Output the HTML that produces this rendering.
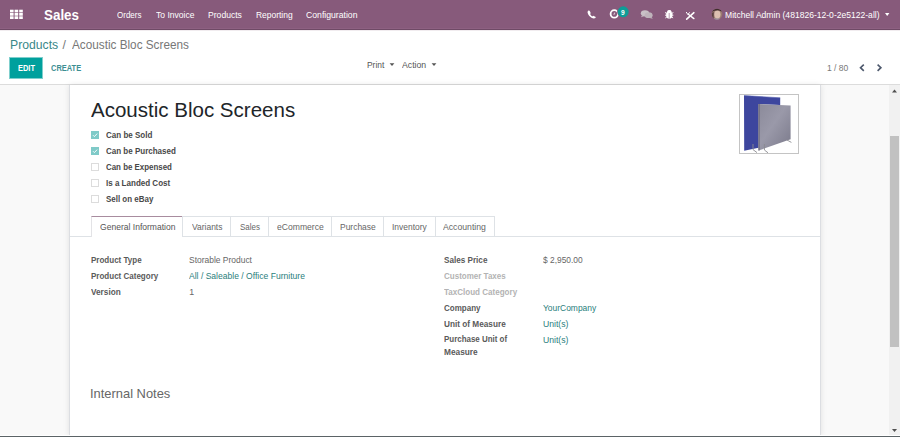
<!DOCTYPE html>
<html><head><meta charset="utf-8"><title>Acoustic Bloc Screens</title>
<style>
html,body{margin:0;padding:0;width:900px;height:437px;overflow:hidden;background:#f9f9f9;font-family:"Liberation Sans",sans-serif;}
.t{position:absolute;white-space:nowrap;}
.r{position:absolute;}
</style></head><body>
<div class="r" style="left:0px;top:0px;width:900px;height:28px;background:#875A7B;"></div>
<div class="r" style="left:0px;top:28px;width:900px;height:1px;background:#8d6081;"></div>
<div class="r" style="left:0px;top:29px;width:900px;height:1px;background:#6f4a66;"></div>
<div class="r" style="left:0px;top:30px;width:900px;height:54px;background:#fff;"></div>
<div class="r" style="left:0px;top:30px;width:900px;height:1px;background:#f1ecef;"></div>
<div class="r" style="left:0px;top:84px;width:900px;height:1px;background:#dcdcdc;"></div>
<div class="r" style="left:0px;top:85px;width:889px;height:351px;background:#f9f9f9;"></div>
<div class="r" style="left:69px;top:85px;width:752px;height:351px;background:#fff;border-left:1px solid #dcdee2;border-right:1px solid #dcdee2;box-sizing:border-box;box-shadow:0 0 6px rgba(0,0,0,0.10);"></div>
<div class="r" style="left:889px;top:85px;width:11px;height:351px;background:#f1f1f1;"></div>
<div class="r" style="left:890px;top:136px;width:9px;height:211px;background:#c1c1c1;"></div>
<svg class="r" style="left:889px;top:85px" width="11" height="351"><path d="M892 92.5 L894.5 89.5 L897 92.5Z" transform="translate(-889,-85)" fill="#505050"/><path d="M892 429 L894.5 432 L897 429Z" transform="translate(-889,-85)" fill="#505050"/></svg>
<div class="r" style="left:0px;top:435px;width:900px;height:1px;background:#fff;"></div>
<div class="r" style="left:0px;top:436px;width:900px;height:1px;background:#5b6366;"></div>
<svg class="r" style="left:0;top:0" width="40" height="29"><rect x="10" y="9.7" width="3.6" height="2.7" fill="#fff"/><rect x="10" y="13.0" width="3.6" height="2.7" fill="#fff"/><rect x="10" y="16.3" width="3.6" height="2.7" fill="#fff"/><rect x="14.6" y="9.7" width="3.6" height="2.7" fill="#fff"/><rect x="14.6" y="13.0" width="3.6" height="2.7" fill="#fff"/><rect x="14.6" y="16.3" width="3.6" height="2.7" fill="#fff"/><rect x="19.2" y="9.7" width="3.6" height="2.7" fill="#fff"/><rect x="19.2" y="13.0" width="3.6" height="2.7" fill="#fff"/><rect x="19.2" y="16.3" width="3.6" height="2.7" fill="#fff"/></svg>
<div class="t" style="left:44.20px;top:8.08px;font-size:14px;line-height:14px;color:#fff;font-weight:700;transform:scaleX(0.9565);transform-origin:0 0;">Sales</div>
<div class="t" style="left:117.30px;top:11.23px;font-size:9px;line-height:9px;color:#fff;transform:scaleX(0.8891);transform-origin:0 0;">Orders</div>
<div class="t" style="left:156.00px;top:11.23px;font-size:9px;line-height:9px;color:#fff;transform:scaleX(0.9478);transform-origin:0 0;">To Invoice</div>
<div class="t" style="left:207.80px;top:11.23px;font-size:9px;line-height:9px;color:#fff;transform:scaleX(0.9551);transform-origin:0 0;">Products</div>
<div class="t" style="left:255.60px;top:11.23px;font-size:9px;line-height:9px;color:#fff;transform:scaleX(0.9380);transform-origin:0 0;">Reporting</div>
<div class="t" style="left:305.60px;top:11.23px;font-size:9px;line-height:9px;color:#fff;transform:scaleX(0.9621);transform-origin:0 0;">Configuration</div>
<svg class="r" style="left:580px;top:0" width="150" height="29" viewBox="580 0 150 29">
<path transform="translate(0,-0.5)" d="M588.2 11.2 C589 10.8 589.6 11 590 12 L590.6 13.3 C590.8 13.8 590.5 14.2 590.1 14.5 C590.6 15.6 591.4 16.4 592.4 16.9 C592.7 16.5 593.1 16.2 593.6 16.4 L594.9 17 C595.7 17.4 595.9 18 595.4 18.6 C594.4 19.3 593 19.2 591.5 18.3 C589.7 17.2 588.3 15.5 587.7 13.6 C587.4 12.6 587.6 11.7 588.2 11.2Z" fill="#fff"/>
<circle cx="614.3" cy="13.9" r="3.7" fill="none" stroke="#fff" stroke-width="1.8"/>
<path d="M614.6 12.6 V14.2 H613.4" fill="none" stroke="#f3e6ef" stroke-width="0.8"/>
<circle cx="623.2" cy="11.8" r="6.1" fill="#875A7B"/><circle cx="623.2" cy="11.8" r="5.5" fill="#0e9c97"/>
<text x="622.9" y="14.6" font-size="6.6" font-weight="700" fill="#fff" text-anchor="middle" font-family="Liberation Sans">9</text>
<ellipse cx="645" cy="13.3" rx="4.2" ry="3.1" fill="#c9c0c6"/>
<path d="M642 15.5 L641 17.3 L644 16Z" fill="#c9c0c6"/>
<ellipse cx="648.6" cy="15.2" rx="4" ry="2.9" fill="#bfb3bb"/>
<path d="M651.5 17 L652.8 18.7 L649.5 17.9Z" fill="#bfb3bb"/>
<ellipse cx="669.3" cy="14.9" rx="3.2" ry="3.6" fill="#fff"/>
<ellipse cx="669.3" cy="11.2" rx="2" ry="1.3" fill="#fff"/>
<path d="M665 12.5 L667 13.5 M673.4 12.5 L671.4 13.5 M665 15.2 H667 M673.4 15.2 H671.4 M665.3 18 L667 16.8 M673.1 18 L671.4 16.8" stroke="#fff" stroke-width="0.9"/>
<path d="M669.2 13 V18" stroke="#875A7B" stroke-width="0.6"/>
<path d="M686.7 19.1 L693.9 12.7" stroke="#fff" stroke-width="1.6" stroke-linecap="round"/>
<path d="M688.6 14.5 L693.9 18.6" stroke="#fff" stroke-width="1.4" stroke-linecap="round"/>
<path d="M686.2 12 L687.9 14.6 L689.6 12.3" stroke="#fff" stroke-width="1" fill="none"/>
<clipPath id="av"><circle cx="717" cy="14.1" r="5.4"/></clipPath>
<g clip-path="url(#av)">
<rect x="711" y="8" width="12" height="13" fill="#9a7a70"/>
<ellipse cx="717.4" cy="14.4" rx="3.1" ry="4" fill="#dcc0b0"/>
<path d="M711.5 12 Q713 8 717.5 8.3 Q721.5 8.6 722.5 11.5 L721 11.2 Q718 9.6 714.5 10.8 Z" fill="#3e2c2c"/>
<path d="M711.5 13 L713.8 12 L713.6 19 L711.5 17Z" fill="#5a4040"/>
<rect x="714" y="18.6" width="6" height="2" fill="#a7a9bd"/>
</g>
</svg>
<div class="t" style="left:725.00px;top:11.03px;font-size:9px;line-height:9px;color:#fff;transform:scaleX(0.9504);transform-origin:0 0;">Mitchell Admin (481826-12-0-2e5122-all)</div>
<svg class="r" style="left:884px;top:12px" width="7" height="5"><path d="M1 1 L5.4 1 L3.2 4Z" fill="#fff"/></svg>
<div class="t" style="left:10.10px;top:39.07px;font-size:12.2px;line-height:12.2px;color:#3a8888;transform:scaleX(1.0021);transform-origin:0 0;">Products</div>
<div class="t" style="left:62.50px;top:39.27px;font-size:12.2px;line-height:12.2px;color:#777;transform:scaleX(1.0000);transform-origin:0 0;">/</div>
<div class="t" style="left:71.60px;top:39.17px;font-size:12.2px;line-height:12.2px;color:#777;transform:scaleX(0.9640);transform-origin:0 0;">Acoustic Bloc Screens</div>
<div class="r" style="left:9px;top:57px;width:34px;height:22px;background:#7fcfcd;"></div>
<div class="r" style="left:10px;top:58px;width:32px;height:20px;background:#00A09D;"></div>
<div class="t" style="left:17.50px;top:65.19px;font-size:8.2px;line-height:8.2px;color:#fff;font-weight:700;transform:scaleX(0.9116);transform-origin:0 0;">EDIT</div>
<div class="t" style="left:51.20px;top:65.19px;font-size:8.2px;line-height:8.2px;color:#3d8f93;font-weight:700;transform:scaleX(0.9109);transform-origin:0 0;">CREATE</div>
<div class="t" style="left:367.00px;top:60.83px;font-size:9px;line-height:9px;color:#555;transform:scaleX(0.9366);transform-origin:0 0;">Print</div>
<svg class="r" style="left:389px;top:62px" width="7" height="5"><path d="M0.6 1.2 L5.4 1.2 L3 4Z" fill="#555"/></svg>
<div class="t" style="left:402.20px;top:60.83px;font-size:9px;line-height:9px;color:#555;transform:scaleX(0.9677);transform-origin:0 0;">Action</div>
<svg class="r" style="left:431px;top:62px" width="7" height="5"><path d="M0.6 1.2 L5.4 1.2 L3 4Z" fill="#555"/></svg>
<div class="t" style="left:826.50px;top:64.03px;font-size:9px;line-height:9px;color:#777;transform:scaleX(0.9462);transform-origin:0 0;">1 / 80</div>
<svg class="r" style="left:855px;top:60px" width="32" height="15"><path d="M8.8 4.6 L5.5 7.7 L8.8 10.8" fill="none" stroke="#4d586c" stroke-width="1.6"/><path d="M22.6 4.6 L25.9 7.7 L22.6 10.8" fill="none" stroke="#4d586c" stroke-width="1.6"/></svg>
<div class="t" style="left:91.10px;top:100.08px;font-size:20.5px;line-height:20.5px;color:#212529;transform:scaleX(1.0010);transform-origin:0 0;">Acoustic Bloc Screens</div>
<div class="r" style="left:91px;top:131px;width:8px;height:8px;background:#7fcac8;"></div>
<svg class="r" style="left:91px;top:131px" width="8" height="8"><path d="M2 4.2 L3.4 5.6 L6.2 2.6" fill="none" stroke="#fff" stroke-width="0.9"/></svg>
<div class="t" style="left:105.70px;top:130.63px;font-size:9px;line-height:9px;color:#484848;font-weight:700;transform:scaleX(0.8911);transform-origin:0 0;">Can be Sold</div>
<div class="r" style="left:91px;top:147px;width:8px;height:8px;background:#7fcac8;"></div>
<svg class="r" style="left:91px;top:147px" width="8" height="8"><path d="M2 4.2 L3.4 5.6 L6.2 2.6" fill="none" stroke="#fff" stroke-width="0.9"/></svg>
<div class="t" style="left:105.70px;top:146.83px;font-size:9px;line-height:9px;color:#484848;font-weight:700;transform:scaleX(0.8894);transform-origin:0 0;">Can be Purchased</div>
<div class="r" style="left:91px;top:163px;width:8px;height:8px;background:#fff;border:1px solid #dcdcdc;box-sizing:border-box;"></div>
<div class="t" style="left:105.70px;top:163.03px;font-size:9px;line-height:9px;color:#484848;font-weight:700;transform:scaleX(0.8789);transform-origin:0 0;">Can be Expensed</div>
<div class="r" style="left:91px;top:179px;width:8px;height:8px;background:#fff;border:1px solid #dcdcdc;box-sizing:border-box;"></div>
<div class="t" style="left:105.70px;top:179.23px;font-size:9px;line-height:9px;color:#484848;font-weight:700;transform:scaleX(0.8915);transform-origin:0 0;">Is a Landed Cost</div>
<div class="r" style="left:91px;top:195px;width:8px;height:8px;background:#fff;border:1px solid #dcdcdc;box-sizing:border-box;"></div>
<div class="t" style="left:105.70px;top:195.43px;font-size:9px;line-height:9px;color:#484848;font-weight:700;transform:scaleX(0.8839);transform-origin:0 0;">Sell on eBay</div>
<div class="r" style="left:739px;top:94px;width:60px;height:60px;background:#fff;border:1px solid #c4c4c4;box-sizing:border-box;"></div>
<svg class="r" style="left:739px;top:94px" width="60" height="60" viewBox="739 94 60 60">
<defs><linearGradient id="g1" x1="0" y1="0" x2="1" y2="1"><stop offset="0" stop-color="#8b8a9a"/><stop offset="0.45" stop-color="#9a99a9"/><stop offset="1" stop-color="#7a798a"/></linearGradient></defs>
<path d="M744 95.6 L780.2 97.8 L780.2 105 L758.5 104 L758.5 147.7 L744.2 150.8Z" fill="#3d469e"/>
<path d="M744 95.6 L780.2 97.8" stroke="#5560b0" stroke-width="0.6"/>
<path d="M758.5 104 L790.6 105.4 L790.6 139.3 L758.5 150.6Z" fill="url(#g1)"/>
<path d="M759 104 L759 150.6" stroke="#5e5d6e" stroke-width="1"/>
<path d="M753 144 L753 149.6 L757 152.6 M764.4 144 L764.4 150 L768 152.8 M787 140 L791.4 142.4" stroke="#8a8a90" stroke-width="0.9" fill="none"/>
</svg>
<div class="r" style="left:70px;top:236px;width:750px;height:1px;background:#dee2e6;"></div>
<div class="r" style="left:91px;top:216px;width:92px;height:21px;background:#fff;border:1px solid #e3e3e6;border-top:1px solid #a88c9f;border-bottom:none;box-sizing:border-box;"></div>
<div class="t" style="left:99.60px;top:223.13px;font-size:9px;line-height:9px;color:#555;transform:scaleX(0.9493);transform-origin:0 0;">General Information</div>
<div class="r" style="left:182px;top:216px;width:49px;height:21px;border:1px solid #dee2e6;box-sizing:border-box;"></div>
<div class="t" style="left:191.80px;top:223.13px;font-size:9px;line-height:9px;color:#666;transform:scaleX(0.9407);transform-origin:0 0;">Variants</div>
<div class="r" style="left:230px;top:216px;width:39px;height:21px;border:1px solid #dee2e6;box-sizing:border-box;"></div>
<div class="t" style="left:239.60px;top:223.13px;font-size:9px;line-height:9px;color:#666;transform:scaleX(0.8864);transform-origin:0 0;">Sales</div>
<div class="r" style="left:268px;top:216px;width:64px;height:21px;border:1px solid #dee2e6;box-sizing:border-box;"></div>
<div class="t" style="left:276.50px;top:223.13px;font-size:9px;line-height:9px;color:#666;transform:scaleX(0.9529);transform-origin:0 0;">eCommerce</div>
<div class="r" style="left:331px;top:216px;width:53px;height:21px;border:1px solid #dee2e6;box-sizing:border-box;"></div>
<div class="t" style="left:339.50px;top:223.13px;font-size:9px;line-height:9px;color:#666;transform:scaleX(0.9391);transform-origin:0 0;">Purchase</div>
<div class="r" style="left:383px;top:216px;width:53px;height:21px;border:1px solid #dee2e6;box-sizing:border-box;"></div>
<div class="t" style="left:391.50px;top:223.13px;font-size:9px;line-height:9px;color:#666;transform:scaleX(0.9382);transform-origin:0 0;">Inventory</div>
<div class="r" style="left:435px;top:216px;width:60px;height:21px;border:1px solid #dee2e6;box-sizing:border-box;"></div>
<div class="t" style="left:443.20px;top:223.13px;font-size:9px;line-height:9px;color:#666;transform:scaleX(0.9635);transform-origin:0 0;">Accounting</div>
<div class="r" style="left:182px;top:216px;width:1px;height:20px;background:#dee2e6;"></div>
<div class="t" style="left:90.70px;top:256.13px;font-size:9px;line-height:9px;color:#5a5a5a;font-weight:700;transform:scaleX(0.8903);transform-origin:0 0;">Product Type</div>
<div class="t" style="left:189.30px;top:256.30px;font-size:8.8px;line-height:8.8px;color:#666;transform:scaleX(0.9609);transform-origin:0 0;">Storable Product</div>
<div class="t" style="left:90.70px;top:272.13px;font-size:9px;line-height:9px;color:#5a5a5a;font-weight:700;transform:scaleX(0.8900);transform-origin:0 0;">Product Category</div>
<div class="t" style="left:189.30px;top:272.30px;font-size:8.8px;line-height:8.8px;color:#2a7e7c;transform:scaleX(0.9728);transform-origin:0 0;">All / Saleable / Office Furniture</div>
<div class="t" style="left:90.70px;top:288.13px;font-size:9px;line-height:9px;color:#5a5a5a;font-weight:700;transform:scaleX(0.9151);transform-origin:0 0;">Version</div>
<div class="t" style="left:189.30px;top:288.30px;font-size:8.8px;line-height:8.8px;color:#666;">1</div>
<div class="t" style="left:444.30px;top:256.13px;font-size:9px;line-height:9px;color:#5a5a5a;font-weight:700;transform:scaleX(0.9036);transform-origin:0 0;">Sales Price</div>
<div class="t" style="left:543.20px;top:256.30px;font-size:8.8px;line-height:8.8px;color:#666;transform:scaleX(0.9547);transform-origin:0 0;">$ 2,950.00</div>
<div class="t" style="left:444.30px;top:271.93px;font-size:9px;line-height:9px;color:#b3b3b3;font-weight:700;transform:scaleX(0.8896);transform-origin:0 0;">Customer Taxes</div>
<div class="t" style="left:444.30px;top:287.93px;font-size:9px;line-height:9px;color:#b3b3b3;font-weight:700;transform:scaleX(0.8932);transform-origin:0 0;">TaxCloud Category</div>
<div class="t" style="left:444.30px;top:303.73px;font-size:9px;line-height:9px;color:#5a5a5a;font-weight:700;transform:scaleX(0.8902);transform-origin:0 0;">Company</div>
<div class="t" style="left:543.20px;top:303.90px;font-size:8.8px;line-height:8.8px;color:#2a7e7c;transform:scaleX(0.9603);transform-origin:0 0;">YourCompany</div>
<div class="t" style="left:444.30px;top:319.53px;font-size:9px;line-height:9px;color:#5a5a5a;font-weight:700;transform:scaleX(0.9140);transform-origin:0 0;">Unit of Measure</div>
<div class="t" style="left:543.20px;top:319.70px;font-size:8.8px;line-height:8.8px;color:#2a7e7c;transform:scaleX(0.9818);transform-origin:0 0;">Unit(s)</div>
<div class="t" style="left:444.30px;top:335.33px;font-size:9px;line-height:9px;color:#5a5a5a;font-weight:700;transform:scaleX(0.8826);transform-origin:0 0;">Purchase Unit of</div>
<div class="t" style="left:543.20px;top:335.50px;font-size:8.8px;line-height:8.8px;color:#2a7e7c;transform:scaleX(0.9818);transform-origin:0 0;">Unit(s)</div>
<div class="t" style="left:444.30px;top:348.13px;font-size:9px;line-height:9px;color:#5a5a5a;font-weight:700;transform:scaleX(0.9230);transform-origin:0 0;">Measure</div>
<div class="t" style="left:89.91px;top:386.91px;font-size:13px;line-height:13px;color:#666;transform:scaleX(0.9921);transform-origin:0 0;">Internal Notes</div>
</body></html>
